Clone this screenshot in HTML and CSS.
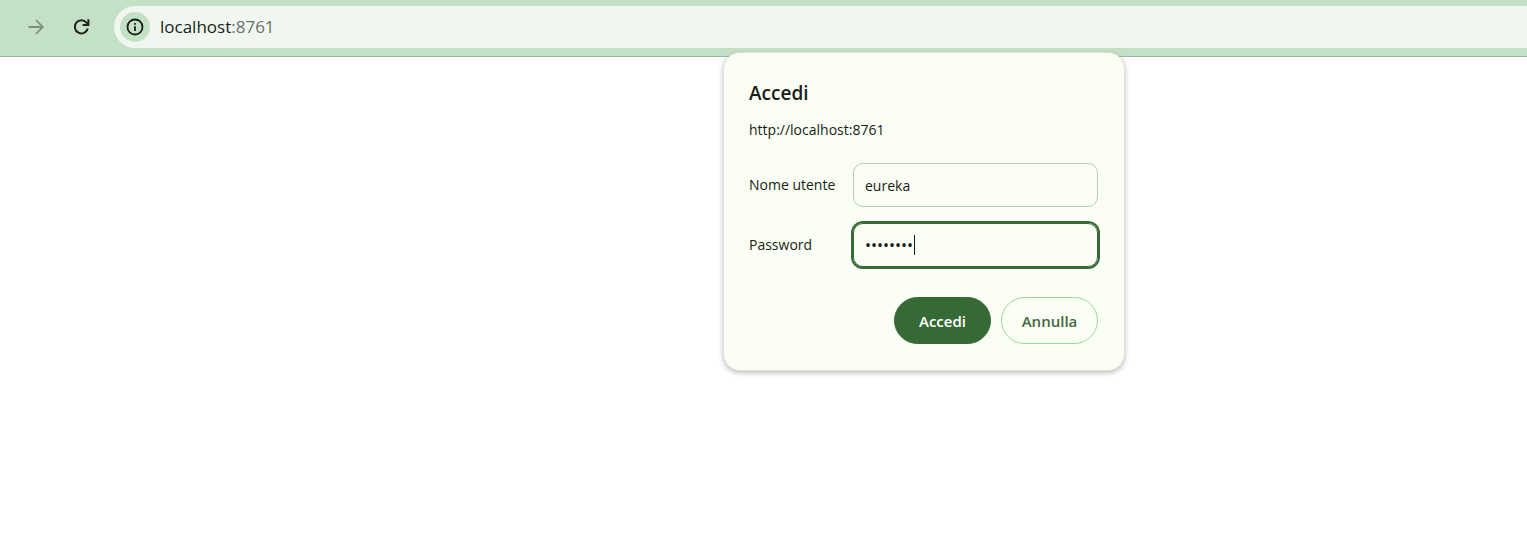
FILE: index.html
```html
<!DOCTYPE html>
<html lang="it">
<head>
<meta charset="utf-8">
<title>localhost:8761</title>
<link rel="stylesheet" href="styles.css">
</head>
<body>
<header class="toolbar">
  <button class="tool forward" type="button" aria-label="Avanti" disabled>
    <svg width="20" height="20" viewBox="0 0 20 20" fill="none" stroke="currentColor" stroke-width="1.8"><path d="M2.5 10H16.5M10 3.2L16.8 10L10 16.8"/></svg>
  </button>
  <button class="tool" type="button" aria-label="Ricarica">
    <svg width="20" height="20" viewBox="0 0 20 20" fill="none" stroke="currentColor" stroke-width="2"><path d="M16.8 11.6A6.6 6.6 0 1 1 15.5 5.6L17 7.4"/><path d="M17.4 2.3V7.9H11.6"/></svg>
  </button>
  <div class="omnibox">
    <button class="site-info" type="button" aria-label="Informazioni sul sito">
      <svg width="18" height="18" viewBox="0 0 18 18" fill="none" stroke="currentColor" stroke-width="1.8"><circle cx="9" cy="9" r="7.5"/><path d="M9 8.2V13M9 5V6.8"/></svg>
    </button>
    <div class="url">localhost<span class="port">:8761</span></div>
  </div>
</header>
<main>
  <form class="dialog" role="dialog" aria-labelledby="title">
    <h1 class="title" id="title">Accedi</h1>
    <p class="origin">http://localhost:8761</p>
    <div class="fields">
      <label for="user">Nome utente</label>
      <div class="field"><input class="input" id="user" type="text" value="eureka"></div>
      <label for="pass">Password</label>
      <div class="field active"><input class="input" id="pass" type="password" value="password"></div>
    </div>
    <div class="actions">
      <button class="button primary" type="button">Accedi</button>
      <button class="button" type="button">Annulla</button>
    </div>
  </form>
</main>
</body>
</html>
```
FILE: styles.css
```css
* {
  box-sizing: border-box;
}

body {
  margin: 0;
  background: #fff;
  color: #191d17;
  font: 14px/20px "Open Sans", "Noto Sans", sans-serif;
}

button {
  padding: 0;
  border: 0;
  background: none;
  color: inherit;
  font: inherit;
}

svg {
  display: block;
}

.toolbar {
  display: flex;
  align-items: center;
  padding: 6px 0 8px 21px;
  border-bottom: 1px solid #9fb39f;
  background: #c5e1c5;
}

.tool {
  display: grid;
  place-items: center;
  width: 30px;
  height: 30px;
  margin-right: 15px;
  color: #1f241f;
}

.forward {
  color: #80917f;
}

.omnibox {
  display: flex;
  flex: 1;
  align-items: center;
  gap: 10px;
  margin-left: 3px;
  padding: 6px;
  border-radius: 21px 0 0 21px;
  background: #f0f7f0;
}

.site-info {
  display: grid;
  place-items: center;
  width: 30px;
  height: 30px;
  border-radius: 50%;
  background: #c5e1c5;
}

.url {
  font-size: 17px;
  line-height: 24px;
}

.port {
  color: #6a706a;
}

.dialog {
  position: absolute;
  top: 52px;
  left: 723px;
  width: 402px;
  padding: 26px 26px 26px 25px;
  border: 1px solid #dde3d6;
  border-radius: 17px;
  background: #fafef4;
  box-shadow: 0 2px 5px rgba(0, 0, 0, 0.26);
}

.title {
  margin: 0;
  font-size: 19px;
  line-height: 28px;
  font-weight: 600;
}

.origin {
  margin: 13px 0 23px;
}

.fields {
  display: grid;
  grid-template-columns: 104px 1fr;
  row-gap: 16px;
  align-items: center;
}

.field {
  position: relative;
}

.input {
  display: block;
  width: 100%;
  height: 44px;
  padding: 0 11px;
  border: 1px solid #c1c6bc;
  border-radius: 10px;
  outline: 0;
  background: transparent;
  color: inherit;
  font: inherit;
}

.active .input {
  border-color: #356a35;
  box-shadow: 0 0 0 2px #356a35;
  font-size: 16px;
}

.active::after {
  content: "";
  position: absolute;
  top: 12px;
  left: 61px;
  width: 1px;
  height: 20px;
  background: #191d17;
}

.actions {
  display: flex;
  justify-content: flex-end;
  gap: 10px;
  margin-top: 30px;
}

.button {
  width: 97px;
  height: 47px;
  border: 1px solid #a0d69b;
  border-radius: 24px;
  color: #42663f;
  font-size: 15px;
  font-weight: 600;
}

.primary {
  border-color: #356a35;
  background: #356a35;
  color: #fff;
}
```
